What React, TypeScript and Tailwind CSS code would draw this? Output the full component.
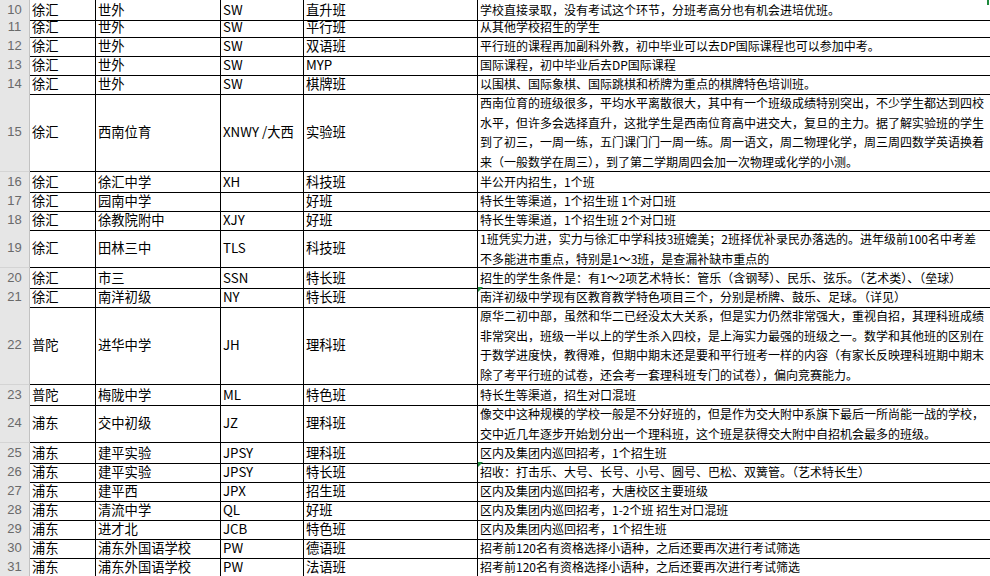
import React from 'react';

type Row = {
  n: number;
  a: string;
  b: string;
  c: string;
  d: string;
  e: string[];
  h: string;
  mark?: boolean;
};

const rows: Row[] = [
  { n: 10, a: '徐汇', b: '世外', c: 'SW', d: '直升班', h: 'h-[17px]', e: ['学校直接录取，没有考试这个环节，分班考高分也有机会进培优班。'] },
  { n: 11, a: '徐汇', b: '世外', c: 'SW', d: '平行班', h: 'h-[19px]', e: ['从其他学校招生的学生'] },
  { n: 12, a: '徐汇', b: '世外', c: 'SW', d: '双语班', h: 'h-[19px]', e: ['平行班的课程再加副科外教，初中毕业可以去DP国际课程也可以参加中考。'] },
  { n: 13, a: '徐汇', b: '世外', c: 'SW', d: 'MYP', h: 'h-[19px]', e: ['国际课程，初中毕业后去DP国际课程'] },
  { n: 14, a: '徐汇', b: '世外', c: 'SW', d: '棋牌班', h: 'h-[19px]', e: ['以围棋、国际象棋、国际跳棋和桥牌为重点的棋牌特色培训班。'] },
  {
    n: 15, a: '徐汇', b: '西南位育', c: 'XNWY /大西', d: '实验班', h: 'h-[79px]',
    e: [
      '西南位育的班级很多，平均水平离散很大，其中有一个班级成绩特别突出，不少学生都达到四校',
      '水平，但许多会选择直升，这批学生是西南位育高中进交大，复旦的主力。据了解实验班的学生',
      '到了初三，一周一练，五门课门门一周一练。周一语文，周二物理化学，周三周四数学英语换着',
      '来（一般数学在周三），到了第二学期周四会加一次物理或化学的小测。',
    ],
  },
  { n: 16, a: '徐汇', b: '徐汇中学', c: 'XH', d: '科技班', h: 'h-[19px]', e: ['半公开内招生，1个班'] },
  { n: 17, a: '徐汇', b: '园南中学', c: '', d: '好班', h: 'h-[19px]', e: ['特长生等渠道，1个招生班 1个对口班'] },
  { n: 18, a: '徐汇', b: '徐教院附中', c: 'XJY', d: '好班', h: 'h-[19px]', e: ['特长生等渠道，1个招生班 2个对口班'] },
  {
    n: 19, a: '徐汇', b: '田林三中', c: 'TLS', d: '科技班', h: 'h-[39px]',
    e: [
      '1班凭实力进，实力与徐汇中学科技3班媲美；2班择优补录民办落选的。进年级前100名中考差',
      '不多能进市重点，特别是1～3班，是查漏补缺市重点的',
    ],
  },
  { n: 20, a: '徐汇', b: '市三', c: 'SSN', d: '特长班', h: 'h-[19px]', e: ['招生的学生条件是：有1～2项艺术特长：管乐（含钢琴）、民乐、弦乐。（艺术类）、（垒球）'] },
  { n: 21, a: '徐汇', b: '南洋初级', c: 'NY', d: '特长班', h: 'h-[19px]', mark: true, e: ['南洋初级中学现有区教育教学特色项目三个，分别是桥牌、鼓乐、足球。（详见）'] },
  {
    n: 22, a: '普陀', b: '进华中学', c: 'JH', d: '理科班', h: 'h-[79px]',
    e: [
      '原华二初中部，虽然和华二已经没太大关系，但是实力仍然非常强大，重视自招，其理科班成绩',
      '非常突出，班级一半以上的学生杀入四校，是上海实力最强的班级之一。数学和其他班的区别在',
      '于数学进度快，教得难，但期中期末还是要和平行班考一样的内容（有家长反映理科班期中期末',
      '除了考平行班的试卷，还会考一套理科班专门的试卷），偏向竞赛能力。',
    ],
  },
  { n: 23, a: '普陀', b: '梅陇中学', c: 'ML', d: '特色班', h: 'h-[19px]', e: ['特长生等渠道，招生对口混班'] },
  {
    n: 24, a: '浦东', b: '交中初级', c: 'JZ', d: '理科班', h: 'h-[39px]',
    e: [
      '像交中这种规模的学校一般是不分好班的，但是作为交大附中系旗下最后一所尚能一战的学校，',
      '交中近几年逐步开始划分出一个理科班，这个班是获得交大附中自招机会最多的班级。',
    ],
  },
  { n: 25, a: '浦东', b: '建平实验', c: 'JPSY', d: '理科班', h: 'h-[19px]', e: ['区内及集团内巡回招考，1个招生班'] },
  { n: 26, a: '浦东', b: '建平实验', c: 'JPSY', d: '特长班', h: 'h-[19px]', mark: true, e: ['招收：打击乐、大号、长号、小号、圆号、巴松、双簧管。（艺术特长生）'] },
  { n: 27, a: '浦东', b: '建平西', c: 'JPX', d: '招生班', h: 'h-[19px]', e: ['区内及集团内巡回招考，大唐校区主要班级'] },
  { n: 28, a: '浦东', b: '清流中学', c: 'QL', d: '好班', h: 'h-[19px]', e: ['区内及集团内巡回招考，1-2个班 招生对口混班'] },
  { n: 29, a: '浦东', b: '进才北', c: 'JCB', d: '特色班', h: 'h-[19px]', e: ['区内及集团内巡回招考，1个招生班'] },
  { n: 30, a: '浦东', b: '浦东外国语学校', c: 'PW', d: '德语班', h: 'h-[19px]', e: ['招考前120名有资格选择小语种，之后还要再次进行考试筛选'] },
  { n: 31, a: '浦东', b: '浦东外国语学校', c: 'PW', d: '法语班', h: 'h-[19px]', e: ['招考前120名有资格选择小语种，之后还要再次进行考试筛选'] },
];

function Cell({ children }: { children: React.ReactNode }) {
  return (
    <div className="flex items-center overflow-hidden whitespace-nowrap border-r border-b border-black pl-[2px] text-[13.3px] leading-none">
      {children}
    </div>
  );
}

function SheetRow({ row }: { row: Row }) {
  const multi = row.e.length > 1;
  return (
    <div className={`grid grid-cols-[30px_66px_125px_83px_174px_1fr] ${row.h}`}>
      {/* row header */}
      <div className="flex items-center justify-center border-r border-b border-r-[#c2c2c2] border-b-[#d4d4d4] bg-[#e6e6e6] font-['Liberation_Sans',sans-serif] text-[13px] text-[#6a6a6a]">
        {row.n}
      </div>
      <Cell>{row.a}</Cell>
      <Cell>{row.b}</Cell>
      <Cell>{row.c}</Cell>
      <Cell>{row.d}</Cell>
      <div
        className={`relative flex overflow-hidden whitespace-nowrap border-b border-black pl-[2px] text-[12px] ${
          multi ? 'items-start leading-[19.7px]' : 'items-center leading-none'
        }`}
      >
        {row.mark && (
          <span className="absolute left-0 top-0 h-0 w-0 border-t-[5px] border-r-[5px] border-t-[#1e8a3c] border-r-transparent" />
        )}
        <div className="flex flex-col">
          {row.e.map((line, i) => (
            <span key={i}>{line}</span>
          ))}
        </div>
      </div>
    </div>
  );
}

export default function App() {
  return (
    <div className="relative h-[576px] w-[990px] overflow-hidden bg-white font-['Noto_Sans_CJK_SC',sans-serif] text-black">
      {rows.map((row) => (
        <SheetRow key={row.n} row={row} />
      ))}
      {/* selection corner peeking in at the top right */}
      <span className="absolute right-[1px] top-0 h-[5px] w-[2px] bg-[#1e8a3c]" />
    </div>
  );
}
